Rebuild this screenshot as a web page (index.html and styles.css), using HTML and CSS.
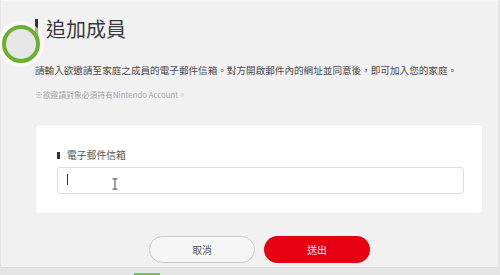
FILE: index.html
```html
<!DOCTYPE html>
<html lang="zh-Hant">
<head>
    <meta charset="UTF-8">
    <title>追加成員</title>
    <link rel="stylesheet" href="styles.css">
</head>
<body>
    <div class="screen">
        <div class="page">
            <h1 class="title"><span class="mark"></span>追加成員</h1>
            <p class="desc">請輸入欲邀請至家庭之成員的電子郵件信箱。對方開啟郵件內的網址並同意後，即可加入您的家庭。</p>
            <p class="note">※欲邀請對象必須持有Nintendo Account。</p>

            <div class="card">
                <label class="label" for="email"><span class="mark small"></span>電子郵件信箱</label>
                <div class="field">
                    <input type="text" id="email" class="input">
                    <span class="caret"></span>
                    <svg class="ibeam" width="6" height="12" viewBox="0 0 6 12">
                        <path d="M0.5 0.8h5M0.5 11.2h5M3 0.8v10.4" stroke="#666" stroke-width="1.2" fill="none"/>
                    </svg>
                </div>
            </div>

            <div class="actions">
                <button class="btn cancel">取消</button>
                <button class="btn send">送出</button>
            </div>

            <div class="touch"></div>
        </div>
        <div class="bottom">
            <span class="stub"></span>
        </div>
    </div>
</body>
</html>
```

FILE: styles.css
```css
body {
    margin: 0;
    background-color: #e6e5e6;
    font-family: "Noto Sans CJK TC", "Noto Sans", sans-serif;
    color: #444;
}

.screen {
    width: 500px;
    height: 275px;
    overflow: hidden;
}

.page {
    position: relative;
    box-sizing: border-box;
    height: 268px;
    margin: 0 2px 0 1px;
    padding: 17px 0 0 34px;
    background-color: #f2f1f2;
    border-top: 1px solid #faf9fa;
    border-bottom: 1px solid #dcdbdc;
}

.title {
    display: flex;
    align-items: center;
    margin: 0;
    font-size: 20px;
    font-weight: normal;
    line-height: 22px;
    color: #3a3a3a;
}

.mark {
    display: inline-block;
    width: 3px;
    height: 21px;
    margin-right: 8px;
    background-color: #333;
}

.mark.small {
    height: 7px;
    margin-right: 7px;
}

.desc {
    margin: 23px 0 0;
    font-size: 9.6px;
    line-height: 14px;
    color: #4a4a4a;
    white-space: nowrap;
}

.note {
    margin: 12px 0 0;
    font-size: 7.8px;
    line-height: 12px;
    color: #a5a4a5;
}

.card {
    box-sizing: border-box;
    width: 448px;
    height: 90px;
    margin-top: 23px;
    padding: 23px 20px 0 21px;
    background-color: #fff;
    border-radius: 4px;
    border: 1px solid #f0eff0;
}

.label {
    display: flex;
    align-items: center;
    font-size: 9.8px;
    line-height: 14px;
    color: #555;
}

.field {
    position: relative;
    margin-top: 5px;
}

.input {
    display: block;
    box-sizing: border-box;
    width: 407px;
    height: 27px;
    border: 1px solid #dddcdf;
    border-radius: 3px;
    background-color: #fff;
}

.caret {
    position: absolute;
    left: 10px;
    top: 7px;
    width: 1px;
    height: 11px;
    background-color: #333;
}

.ibeam {
    position: absolute;
    left: 55px;
    top: 11px;
}

.actions {
    display: flex;
    gap: 9px;
    margin: 22px 0 0 114px;
}

.btn {
    box-sizing: border-box;
    width: 106px;
    height: 27px;
    border-radius: 14px;
    font-family: inherit;
    font-size: 9.8px;
}

.cancel {
    background-color: #f7f6f7;
    border: 1px solid #c9c8c9;
    color: #555;
}

.send {
    background-color: #e60012;
    border: none;
    color: #fff;
}

.touch {
    position: absolute;
    left: 1px;
    top: 24px;
    width: 30px;
    height: 30px;
    border: 4px solid #6cb02e;
    border-radius: 50%;
    background-color: #e8e7e8;
    box-shadow: 0 0 0 4px rgba(255, 255, 255, 0.6);
}

.bottom {
    height: 7px;
    display: flex;
    align-items: flex-end;
}

.stub {
    width: 26px;
    height: 2px;
    margin-left: 134px;
    background-color: #7cc04a;
}
```
